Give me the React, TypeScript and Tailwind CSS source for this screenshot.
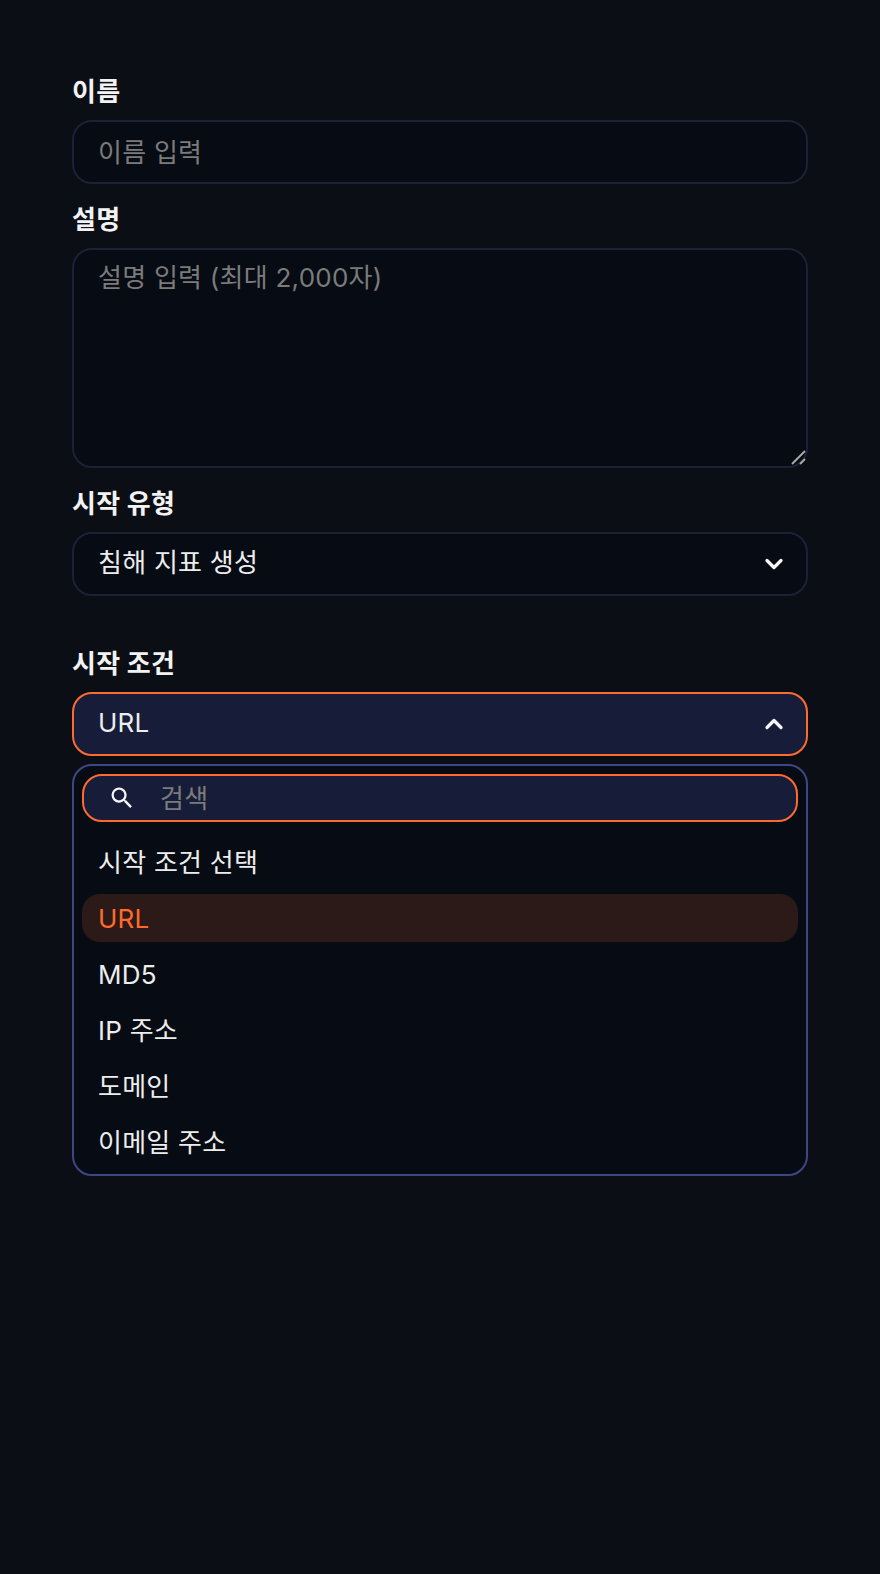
import { ChevronDown, ChevronUp } from "lucide-react";

const font = "font-['Inter','Noto_Sans_CJK_KR',sans-serif]";

function Label({ children, className = "" }: { children: string; className?: string }) {
  return <label className={`block h-10 mb-2 text-[26px] leading-10 font-bold text-[#f2f2f2] ${className}`}>{children}</label>;
}

function SearchIcon() {
  return (
    <svg width="28" height="28" viewBox="0 0 24 24" fill="#f5f5f5" className="shrink-0">
      <path d="M15.5 14h-.79l-.28-.27A6.471 6.471 0 0 0 16 9.5 6.5 6.5 0 1 0 9.5 16c1.61 0 3.09-.59 4.23-1.57l.27.28v.79l5 4.99L20.49 19l-4.99-5zm-6 0C7.01 14 5 11.99 5 9.5S7.01 5 9.5 5 14 7.01 14 9.5 11.99 14 9.5 14z" />
    </svg>
  );
}

function Resizer() {
  return (
    <svg width="16" height="16" viewBox="0 0 16 16" className="absolute right-[1px] bottom-[3px] pointer-events-none" stroke="#a8a8a8" strokeWidth="2">
      <path d="M1 15L14 2" />
      <path d="M9 15L14 10" />
    </svg>
  );
}

const items = ["시작 조건 선택", "URL", "MD5", "IP 주소", "도메인", "이메일 주소"];

export default function App() {
  return (
    <div className={`min-h-[1574px] w-[880px] bg-[#0b0e15] px-[72px] pt-[72px] tracking-[0.25px] ${font}`}>
      <Label>이름</Label>
      <input
        placeholder="이름 입력"
        className="block w-full h-16 rounded-[20px] border-2 border-[#1c2138] bg-[#070b13] px-6 text-[26px] text-white outline-none placeholder:text-[#7b7b7b]"
      />
      <Label className="mt-4">설명</Label>
      <div className="relative">
        <textarea
          placeholder="설명 입력 (최대 2,000자)"
          className="block w-full h-[220px] rounded-[20px] border-2 border-[#1c2138] bg-[#070b13] px-6 py-[10px] text-[26px] leading-9 text-white outline-none resize-none placeholder:text-[#7b7b7b]"
        />
        <Resizer />
      </div>
      <Label className="mt-4">시작 유형</Label>
      <div className="flex items-center justify-between h-16 rounded-[20px] border-2 border-[#1c2138] bg-[#070b13] pl-6 pr-[18px] text-[26px] text-[#ededed]">
        <span className="pb-1">침해 지표 생성</span>
        <ChevronDown size={28} strokeWidth={2.8} color="#f5f5f5" />
      </div>
      <Label className="mt-12">시작 조건</Label>
      <div className="flex items-center justify-between h-16 rounded-[20px] border-2 border-[#ff6b2c] bg-[#171c38] pl-6 pr-[18px] text-[26px] text-[#ededed]">
        <span className="pb-1">URL</span>
        <ChevronUp size={28} strokeWidth={2.8} color="#f5f5f5" />
      </div>
      <div className="mt-2 rounded-[20px] border-2 border-[#3d4687] bg-[#070b13] p-2 flex flex-col gap-2">
        <div className="flex items-center h-12 rounded-[20px] border-2 border-[#ff6b2c] bg-[#171c38] pl-6 mb-2">
          <SearchIcon />
          <input
            placeholder="검색"
            className="ml-6 flex-1 min-w-0 bg-transparent text-[26px] text-white outline-none placeholder:text-[#7b7b7b]"
          />
        </div>
        {items.map((t) => (
          <div
            key={t}
            className={`flex items-center h-12 rounded-[18px] px-4 text-[26px] ${t === "URL" ? "bg-[#2c1a18] text-[#ff6b2c]" : "text-[#ededed]"}`}
          >
            {t}
          </div>
        ))}
      </div>
    </div>
  );
}
